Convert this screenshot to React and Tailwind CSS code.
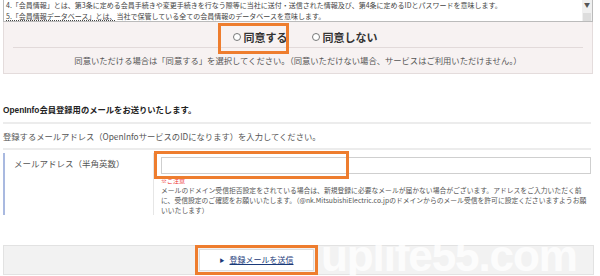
import { useState } from 'react'

const JP = { fontFamily: '"Noto Sans CJK JP", "Noto Sans", sans-serif' }

export default function App() {
  const [agree, setAgree] = useState(null)
  const [email, setEmail] = useState('')

  return (
    <div className="w-[600px] h-[276px] bg-white overflow-hidden relative text-[#333]" style={JP}>
      {/* Terms box */}
      <div className="mx-[3px] w-[590px] h-[22px] border border-[#bbb] border-t-0 bg-white flex overflow-hidden">
        <div className="flex-1 pl-[2px] text-[7px] leading-[11px] text-[#444]">
          <p className="whitespace-nowrap h-[11px]">4.「会員情報」とは、第3条に定める会員手続きや変更手続きを行なう際等に当社に送付・送信された情報及び、第4条に定めるIDとパスワードを意味します。</p>
          <p className="whitespace-nowrap h-[11px]"><span className="underline decoration-dotted">5.「会員情報データベース」とは、</span>当社で保管している全ての会員情報のデータベースを意味します。</p>
        </div>
        <div className="w-[10px] bg-[#f0f0f0] flex flex-col items-center justify-between">
          <span className="text-[6px] leading-[10px] text-[#555]">▼</span>
          <span className="w-[8px] h-[8px] bg-[#ddd]" />
        </div>
      </div>

      {/* Agreement panel */}
      <div className="mx-[3px] w-[590px] h-[52px] bg-[#f7f2f2] border-x border-b border-[#e4dcdc] px-[9px] relative">
        <div className="h-[26px] pt-[8px] flex items-start justify-center border-b border-[#e2dada]">
          <label className="ml-[14px] flex items-center gap-[3px] cursor-pointer">
            <input type="radio" name="agree" checked={agree === 'yes'} onChange={() => setAgree('yes')} className="w-[8px] h-[8px] accent-gray-400" />
            <span className="text-[11px] leading-[14px] font-bold text-[#333]">同意する</span>
          </label>
          <label className="ml-[24px] flex items-center gap-[3px] cursor-pointer">
            <input type="radio" name="agree" checked={agree === 'no'} onChange={() => setAgree('no')} className="w-[8px] h-[8px] accent-gray-400" />
            <span className="text-[11px] leading-[14px] font-bold text-[#333]">同意しない</span>
          </label>
        </div>
        <p className="text-center text-[8.3px] leading-[25px] text-[#555]">
          同意いただける場合は「同意する」を選択してください。（同意いただけない場合、サービスはご利用いただけません。）
        </p>
        <div className="absolute left-[214px] top-[1px] w-[71px] h-[31px] border-[3px] border-[#ee7d2e] pointer-events-none" />
      </div>

      {/* Mail section */}
      <div className="mx-[3px] w-[588px] mt-[27px]">
        <p className="text-[8.3px] font-bold leading-[19px] text-[#222]" style={{ fontFamily: '"Liberation Sans", "Noto Sans CJK JP", sans-serif' }}>
          OpenInfo会員登録用のメールをお送りいたします。
        </p>
        <div className="h-[2px] bg-[#ececec] mt-[2px]" />
        <p className="text-[8.3px] leading-[23px] text-[#555] pt-[1px]">
          登録するメールアドレス（OpenInfoサービスのIDになります）を入力してください。
        </p>
        <div className="h-[2px] bg-[#ececec]" />

        <div className="flex mt-[3px] h-[62px]">
          <div className="w-[150px] border-l-2 border-[#a9b9e0] pl-[9px] pt-[4px] text-[8.5px] leading-[12px] text-[#555]">
            メールアドレス（半角英数）
          </div>
          <div className="border-l border-[#e6e6e6] pl-[2px] flex-1 relative">
            <div className="ml-[5px] mt-[4px] h-[17px] border border-[#cfcfcf] bg-white">
              <input value={email} onChange={e => setEmail(e.target.value)} className="w-full h-full outline-none px-1 text-[10px]" />
            </div>
            <div className="absolute left-[0px] top-[-2px] w-[195px] h-[28px] border-[3px] border-[#ee7d2e] pointer-events-none" />
            <div className="pl-[5px] pt-[3px] text-[6.8px] leading-[10px] text-[#555]">
              <p className="text-[#e33] text-[6px] leading-[8px]">※ご注意</p>
              <p>メールのドメイン受信拒否設定をされている場合は、新規登録に必要なメールが届かない場合がございます。アドレスをご入力いただく前に、受信設定のご確認をお願いいたします。（@nk.MitsubishiElectric.co.jpのドメインからのメール受信を許可に設定くださいますようお願いいたします）</p>
            </div>
          </div>
        </div>
      </div>

      {/* Submit bar */}
      <div className="mx-[3px] w-[591px] mt-[30px] h-[30px] bg-[#f2f2f2] border border-[#e2e2e2] flex items-center justify-center pr-[84px] relative">
        <div className="w-[123px] h-[30px] border-[3px] border-[#ee7d2e] bg-[#f2f2f2] flex items-center justify-center p-[1px]">
          <button className="w-full h-full bg-white border border-[#ddd] flex items-center justify-center gap-[5px] text-[8px] text-[#1a3a7a]">
            <span className="text-[5px]">▶</span>
            <span className="underline">登録メールを送信</span>
          </button>
        </div>
        <span className="absolute left-[317px] top-[-12px] text-[44px] font-bold text-white/80 leading-none tracking-tight pointer-events-none" style={{ fontFamily: '"Liberation Sans", Arial, sans-serif' }}>
          uplife55.com
        </span>
      </div>
    </div>
  )
}
